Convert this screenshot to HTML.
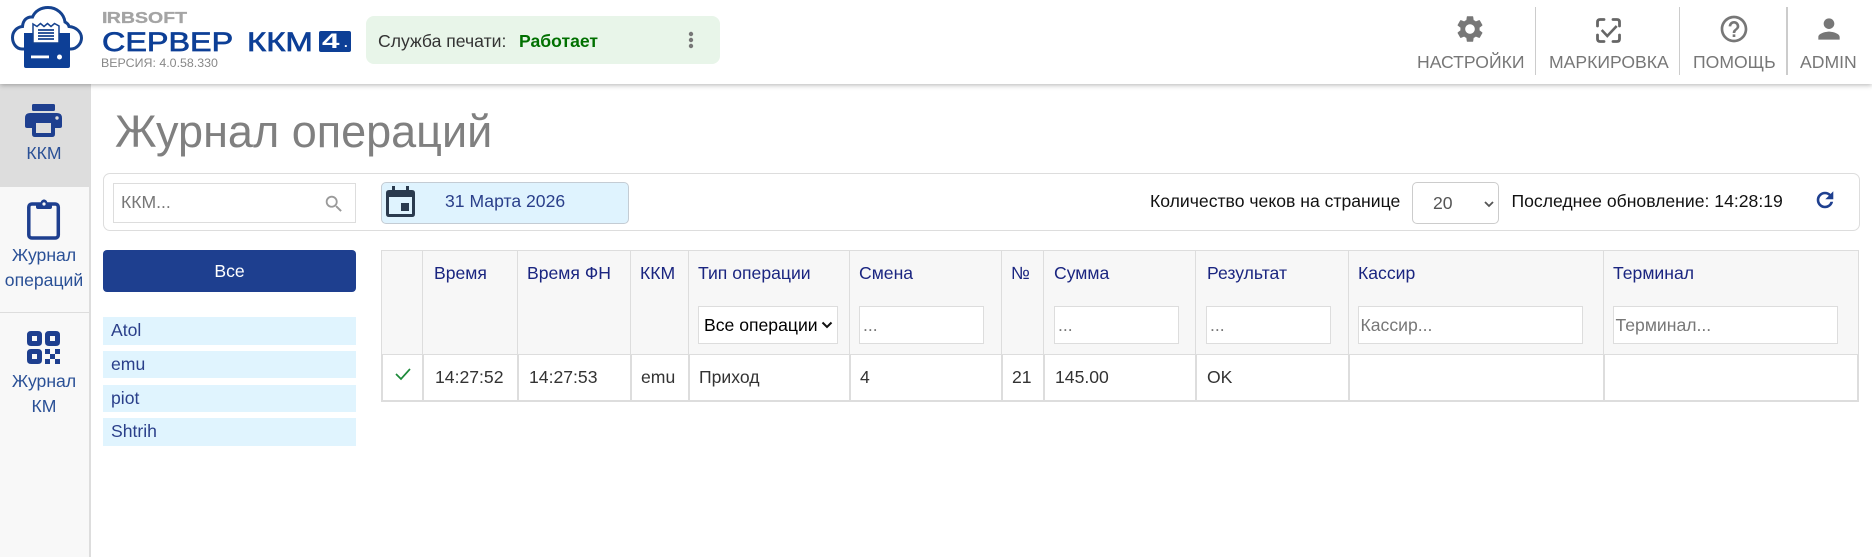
<!DOCTYPE html>
<html lang="ru"><head><meta charset="utf-8"><title>Журнал операций</title>
<style>
*{box-sizing:border-box}
html,body{margin:0;padding:0;width:1872px;height:557px;overflow:hidden;background:#fff;font-family:"Liberation Sans",Arial,sans-serif}
.a{position:absolute;white-space:nowrap}
.b{position:absolute}
svg{position:absolute;display:block}
.nav{color:#777;font-size:17.6px;line-height:20px;top:52px;position:absolute;white-space:nowrap}
.sep{position:absolute;top:7px;height:68px;width:1px;background:#ccc}
.side{position:absolute;left:0;width:88px;text-align:center;color:#2a5096;font-size:17.6px;line-height:20px;white-space:nowrap}
.th{position:absolute;top:263px;color:#1a2580;font-size:17.6px;line-height:20px;white-space:nowrap}
.td{position:absolute;top:367px;color:#333;font-size:17.6px;line-height:20px;white-space:nowrap}
.inp{position:absolute;top:306px;height:38px;background:#fff;border:1px solid #ddd;color:#777;font-size:17.6px;line-height:36px;padding-left:3px;white-space:nowrap;overflow:hidden}
.vh{position:absolute;top:250px;height:104px;width:1px;background:#ddd}
.vb{position:absolute;top:355px;height:46px;width:2px;background:#ddd}
.li{position:absolute;left:103px;width:253px;background:#e0f4fe;color:#2a3f8a;font-size:17.6px;line-height:26px;padding-left:8px}
</style></head><body>

<!-- header -->
<div class="b" style="left:0;top:0;width:1872px;height:84px;background:#fff;box-shadow:0 1px 5px rgba(0,0,0,.3);z-index:5">
<svg style="left:10px;top:6px" width="74" height="63" viewBox="0 0 74 63">
<path d="M14 43H12C6 43 2.500 37 2.500 31.500C2.500 25.500 7 21 12.500 20.500C13 14 17 10.500 22.500 11C25 5 31 1.500 38 1.500C47 1.500 54 8 55 16C57 17 58.500 18.500 59 20.500C66 21 71.500 26 71.500 32C71.500 37 67 43 61 43H58" fill="none" stroke="#15428f" stroke-width="3" stroke-linecap="round"/>
<path d="M14 27H60V60Q60 62 58 62H16Q14 62 14 60Z" fill="#0d3f96"/>
<path d="M23 18L27 20.500L30.500 17.500L34 20.500L37.500 17.500L41 20.500L44.500 17.500L49 20V37H23Z" fill="#fff" stroke="#15428f" stroke-width="1.500"/>
<path d="M28 24H44M28 27H44M28 30H44M28 33H44" stroke="#15428f" stroke-width="1.700"/>
<rect x="21" y="49.500" width="18" height="2.800" fill="#fff"/><circle cx="49.500" cy="51" r="2.500" fill="#fff"/>
</svg>
<div class="a" style="left:102px;top:12px;font:bold 15.500px/14px 'Liberation Sans',sans-serif;color:#a4a4a4;-webkit-text-stroke:.3px #a4a4a4;transform-origin:0 0;transform:scaleX(1.260)"><span style="letter-spacing:-.5px">I</span>RBSOFT</div>
<div class="a" style="left:102px;top:26px;font:400 27px/32px 'Liberation Sans',sans-serif;color:#0d3f96;-webkit-text-stroke:.7px #0d3f96;transform-origin:0 0;transform:scaleX(1.197)">СЕРВЕР</div>
<div class="a" style="left:247px;top:26px;font:400 27px/32px 'Liberation Sans',sans-serif;color:#0d3f96;-webkit-text-stroke:.7px #0d3f96;transform-origin:0 0;transform:scaleX(1.220)">ККМ</div>
<div class="b" style="left:319px;top:31px;width:32px;height:21px;background:#0d3f96;border-radius:2px"></div>
<div class="a" style="left:322px;top:31px;font:bold 21px/21px 'Liberation Sans',sans-serif;color:#fff;transform-origin:0 0;transform:scaleX(1.500)">4</div>
<div class="a" style="left:344px;top:36px;font:bold 13px/14px 'Liberation Sans',sans-serif;color:#fff">.</div>
<div class="a" style="left:101px;top:56px;font-size:12.400px;line-height:14px;color:#888">ВЕРСИЯ: 4.0.58.330</div>

<div class="b" style="left:366px;top:16px;width:354px;height:48px;background:#e8f5e9;border-radius:8px"></div>
<div class="a" style="left:378px;top:31px;font-size:17.6px;line-height:20px;color:#333">Служба печати:</div>
<div class="a" style="left:519px;top:31px;font-size:17.6px;line-height:20px;font-weight:bold;color:#007000">Работает</div>
<svg style="left:686px;top:30px" width="10" height="20" viewBox="0 0 10 20"><circle cx="5" cy="4" r="2.200" fill="#777"/><circle cx="5" cy="10" r="2.200" fill="#777"/><circle cx="5" cy="16" r="2.200" fill="#777"/></svg>

<svg style="left:1454px;top:13px" width="32" height="32" viewBox="0 0 24 24"><path fill="#777" d="M19.14 12.94c.04-.3.06-.61.06-.94 0-.32-.02-.64-.07-.94l2.03-1.58c.18-.14.23-.41.12-.61l-1.92-3.32c-.12-.22-.37-.29-.59-.22l-2.39.96c-.5-.38-1.03-.7-1.62-.94l-.36-2.54c-.04-.24-.24-.41-.48-.41h-3.84c-.24 0-.43.17-.47.41l-.36 2.54c-.59.24-1.13.57-1.62.94l-2.39-.96c-.22-.08-.47 0-.59.22L2.74 8.87c-.12.21-.08.47.12.61l2.03 1.58c-.05.3-.09.63-.09.94s.02.64.07.94l-2.03 1.58c-.18.14-.23.41-.12.61l1.92 3.32c.12.22.37.29.59.22l2.39-.96c.5.38 1.03.7 1.62.94l.36 2.54c.05.24.24.41.48.41h3.84c.24 0 .44-.17.47-.41l.36-2.54c.59-.24 1.13-.56 1.62-.94l2.39.96c.22.08.47 0 .59-.22l1.92-3.32c.12-.22.07-.47-.12-.61l-2.01-1.58zM12 15.6c-1.98 0-3.6-1.62-3.6-3.6s1.62-3.6 3.6-3.6 3.6 1.62 3.6 3.6-1.62 3.6-3.6 3.6z"/></svg>
<div class="nav" style="left:1417px">НАСТРОЙКИ</div>
<div class="sep" style="left:1535px"></div>
<svg style="left:1596px;top:18px" width="26" height="26" viewBox="0 0 26 26"><path d="M1.500 8V4Q1.500 1.500 4 1.500H8M17 1.500H21Q23.500 1.500 23.500 4V8M23.500 17V21Q23.500 23.500 21 23.500H17M8 23.500H4Q1.500 23.500 1.500 21V17" fill="none" stroke="#666" stroke-width="2.800" stroke-linecap="round"/><path d="M5.700 12L11.300 18L20.700 8" fill="none" stroke="#666" stroke-width="2.600"/></svg>
<div class="nav" style="left:1549px">МАРКИРОВКА</div>
<div class="sep" style="left:1679px"></div>
<svg style="left:1718px;top:13px" width="32" height="32" viewBox="0 0 24 24"><path fill="#777" d="M11 18h2v-2h-2v2zm1-16C6.48 2 2 6.480 2 12s4.480 10 10 10 10-4.480 10-10S17.520 2 12 2zm0 18c-4.410 0-8-3.590-8-8s3.590-8 8-8 8 3.590 8 8-3.590 8-8 8zm0-14c-2.210 0-4 1.790-4 4h2c0-1.100.9-2 2-2s2 .9 2 2c0 2-3 1.750-3 5h2c0-2.250 3-2.500 3-5 0-2.210-1.790-4-4-4z"/></svg>
<div class="nav" style="left:1693px">ПОМОЩЬ</div>
<div class="b" style="left:1786px;top:7px;width:2px;height:68px;background:#ccc"></div>
<svg style="left:1813px;top:13px" width="32" height="32" viewBox="0 0 24 24"><path fill="#777" d="M12 12c2.210 0 4-1.790 4-4s-1.790-4-4-4-4 1.790-4 4 1.790 4 4 4zm0 2c-2.670 0-8 1.340-8 4v2h16v-2c0-2.660-5.330-4-8-4z"/></svg>
<div class="nav" style="left:1800px">ADMIN</div>
</div>

<!-- sidebar -->
<div class="b" style="left:0;top:84px;width:91px;height:473px;background:#f8f8f8;border-right:2px solid #ddd"></div>
<div class="b" style="left:0;top:84px;width:91px;height:103px;background:#ddd"></div>
<div class="b" style="left:0;top:312px;width:89px;height:1px;background:#ddd"></div>
<svg style="left:25px;top:103px" width="38" height="35" viewBox="0 0 38 35" fill="#1e3f8f"><rect x="7" y="1" width="23" height="7" rx="1.500"/><path fill-rule="evenodd" d="M5 10H32Q37 10 37 15V23Q37 25 35 25H30V31Q30 34 27 34H10Q7 34 7 31V25H2Q0 25 0 23V15Q0 10 5 10ZM11 20V30H26V20Z"/><circle cx="32" cy="15" r="1.700" fill="#ddd"/></svg>
<div class="side" style="top:143px">ККМ</div>
<svg style="left:27px;top:199px" width="34" height="41" viewBox="0 0 34 41"><rect x="1.800" y="5" width="29.500" height="34" rx="3" fill="none" stroke="#1e3f8f" stroke-width="3.500"/><path d="M9 4H13.500C14 1.500 15.500 .5 17 .5C18.500 .5 20 1.500 20.500 4H25V8Q25 10 23 10H11Q9 10 9 8Z" fill="#1e3f8f"/><circle cx="17" cy="5" r="1.600" fill="#f8f8f8"/></svg>
<div class="side" style="top:245px">Журнал</div>
<div class="side" style="top:270px">операций</div>
<svg style="left:27px;top:331px" width="33" height="33" viewBox="0 0 33 33" fill="#1e3f8f"><path fill-rule="evenodd" d="M4 0H11Q15 0 15 4V11Q15 15 11 15H4Q0 15 0 11V4Q0 0 4 0ZM5 5V10H10V5ZM22 0H29Q33 0 33 4V11Q33 15 29 15H22Q18 15 18 11V4Q18 0 22 0ZM23 5V10H28V5ZM4 18H11Q15 18 15 22V29Q15 33 11 33H4Q0 33 0 29V22Q0 18 4 18ZM5 23V28H10V23Z"/><rect x="18" y="18" width="5" height="5"/><rect x="28" y="18" width="5" height="5"/><rect x="23" y="23" width="5" height="5"/><rect x="18" y="28" width="5" height="5"/><rect x="28" y="28" width="5" height="5"/></svg>
<div class="side" style="top:371px">Журнал</div>
<div class="side" style="top:396px">КМ</div>

<!-- title -->
<div class="a" style="left:115px;top:108px;font-size:45px;line-height:48px;color:#808080">Журнал операций</div>

<!-- filter panel -->
<div class="b" style="left:103px;top:173px;width:1757px;height:58px;border:1px solid #ddd;border-radius:7px"></div>
<div class="b" style="left:113px;top:183px;width:243px;height:40px;border:1px solid #ddd"></div>
<div class="a" style="left:121px;top:192px;font-size:17.6px;line-height:20px;color:#777">ККМ...</div>
<svg style="left:323px;top:193px" width="22" height="22" viewBox="0 0 24 24"><path fill="#9a9a9a" d="M15.500 14h-.79l-.28-.27C15.410 12.590 16 11.110 16 9.500 16 5.910 13.090 3 9.500 3S3 5.910 3 9.500 5.910 16 9.500 16c1.610 0 3.090-.59 4.230-1.570l.27.28v.79l5 4.990L20.490 19l-4.990-5zm-6 0C7.010 14 5 11.990 5 9.500S7.010 5 9.500 5 14 7.010 14 9.500 11.990 14 9.500 14z"/></svg>

<div class="b" style="left:381px;top:182px;width:248px;height:42px;background:#dff3fe;border:1px solid #c4ccd4;border-radius:5px"></div>
<svg style="left:383px;top:183px" width="35" height="35" viewBox="0 0 35 35"><path fill="#2a3a4e" fill-rule="evenodd" d="M9 3H12V7H23V3H26V7H29Q32 7 32 10V31Q32 34 29 34H6Q3 34 3 31V10Q3 7 6 7H9ZM6 14V31H29V14Z"/><rect x="18" y="20" width="8" height="8" fill="#2a3a4e"/></svg>
<div class="a" style="left:445px;top:191px;font-size:17.6px;line-height:20px;color:#2a3f8a">31 Марта 2026</div>

<div class="a" style="left:1150px;top:191px;font-size:17.6px;line-height:20px;color:#111">Количество чеков на странице</div>
<div class="b" style="left:1412px;top:182px;width:87px;height:42px;border:1px solid #ccc;border-radius:5px"></div>
<div class="a" style="left:1433px;top:193px;font-size:17.6px;line-height:20px;color:#555">20</div>
<svg style="left:1483px;top:199px" width="12" height="10" viewBox="0 0 12 10"><path d="M2 3L6 7L10 3" fill="none" stroke="#555" stroke-width="1.800"/></svg>
<div class="a" style="left:1511.500px;top:191px;font-size:17.6px;line-height:20px;color:#111">Последнее обновление: 14:28:19</div>
<svg style="left:1813px;top:187.500px" width="24" height="24" viewBox="0 0 24 24"><path fill="#1e3f8f" stroke="#1e3f8f" stroke-width=".6" d="M17.650 6.350C16.200 4.900 14.210 4 12 4c-4.420 0-7.990 3.580-7.990 8s3.570 8 7.990 8c3.730 0 6.840-2.550 7.730-6h-2.080c-.82 2.330-3.040 4-5.650 4-3.310 0-6-2.690-6-6s2.690-6 6-6c1.660 0 3.140.69 4.220 1.780L13 11h7V4l-2.350 2.350z"/></svg>

<!-- list -->
<div class="b" style="left:103px;top:250px;width:253px;height:42px;background:#1e3f8f;border-radius:4px;color:#fff;font-size:17.6px;line-height:42px;text-align:center">Все</div>
<div class="li" style="top:317px;height:28px">Atol</div>
<div class="li" style="top:351px;height:27px">emu</div>
<div class="li" style="top:385px;height:27px">piot</div>
<div class="li" style="top:418px;height:28px">Shtrih</div>

<!-- table -->
<div class="b" style="left:381px;top:250px;width:1478px;height:152px;border:2px solid #ddd;border-top-width:1px"></div>
<div class="b" style="left:382px;top:251px;width:1476px;height:103px;background:#f7f7f7"></div>
<div class="b" style="left:382px;top:354px;width:1476px;height:1px;background:#ddd"></div>
<div class="vh" style="left:422px"></div><div class="vb" style="left:422px"></div>
<div class="vh" style="left:517px"></div><div class="vb" style="left:517px"></div>
<div class="vh" style="left:630px"></div><div class="vb" style="left:630px"></div>
<div class="vh" style="left:688px"></div><div class="vb" style="left:688px"></div>
<div class="vh" style="left:849px"></div><div class="vb" style="left:849px"></div>
<div class="vh" style="left:1001px"></div><div class="vb" style="left:1001px"></div>
<div class="vh" style="left:1043px"></div><div class="vb" style="left:1043px"></div>
<div class="vh" style="left:1195px"></div><div class="vb" style="left:1195px"></div>
<div class="vh" style="left:1348px"></div><div class="vb" style="left:1348px"></div>
<div class="vh" style="left:1603px"></div><div class="vb" style="left:1603px"></div>

<div class="th" style="left:434px">Время</div>
<div class="th" style="left:527px">Время ФН</div>
<div class="th" style="left:640px">ККМ</div>
<div class="th" style="left:698px">Тип операции</div>
<div class="th" style="left:859px">Смена</div>
<div class="th" style="left:1011px">№</div>
<div class="th" style="left:1054px">Сумма</div>
<div class="th" style="left:1207px">Результат</div>
<div class="th" style="left:1358px">Кассир</div>
<div class="th" style="left:1613px">Терминал</div>

<div class="inp" style="left:698px;width:140px;color:#000;padding-left:5px">Все операции</div>
<svg style="left:821px;top:320px" width="12" height="10" viewBox="0 0 12 10"><path d="M1.500 2.500L6 7L10.500 2.500" fill="none" stroke="#111" stroke-width="2"/></svg>
<div class="inp" style="left:859px;width:125px">...</div>
<div class="inp" style="left:1054px;width:125px">...</div>
<div class="inp" style="left:1206px;width:125px">...</div>
<div class="inp" style="left:1358px;width:225px;padding-left:1.500px">Кассир...</div>
<div class="inp" style="left:1613px;width:225px;padding-left:1.500px">Терминал...</div>

<svg style="left:395px;top:367px" width="16" height="14" viewBox="0 0 16 14"><path d="M1 7L6 12L15 2" fill="none" stroke="#1d8a3a" stroke-width="1.700"/></svg>
<div class="td" style="left:435px">14:27:52</div>
<div class="td" style="left:529px">14:27:53</div>
<div class="td" style="left:641px">emu</div>
<div class="td" style="left:699px">Приход</div>
<div class="td" style="left:860px">4</div>
<div class="td" style="left:1012px">21</div>
<div class="td" style="left:1055px">145.00</div>
<div class="td" style="left:1207px">OK</div>
</body></html>
